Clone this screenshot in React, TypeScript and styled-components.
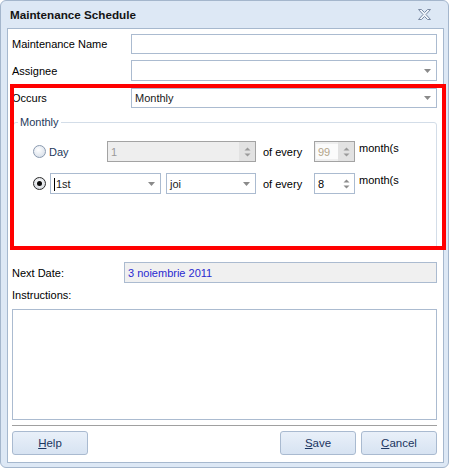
import styled, { createGlobalStyle } from "styled-components";

const GlobalStyle = createGlobalStyle`
  body {
    margin: 0;
    background: #ffffff;
    font-family: "Liberation Sans", Arial, sans-serif;
    font-size: 11px;
    color: #000;
  }
  * { box-sizing: border-box; }
`;

const FIELD_BORDER = "#abbbd0";

const Window = styled.div`
  position: relative;
  width: 449px;
  height: 468px;
  display: flex;
  flex-direction: column;
  background: #dde8f5;
  border: 1px solid #a4b6cc;
  border-radius: 6px;
`;

const TitleBar = styled.div`
  height: 27px;
  display: flex;
  align-items: center;
  justify-content: space-between;
  padding: 0 17px 0 9px;
`;

const Title = styled.div`
  font-size: 11.7px;
  font-weight: bold;
  color: #141414;
`;

const CloseButton = styled.div`
  width: 13px;
  height: 11px;
  display: flex;
`;

const Panel = styled.div`
  margin: 0 4px 4px 6px;
  flex: 1;
  display: flex;
  flex-direction: column;
  background: #ffffff;
  border: 1px solid #a6b8ce;
  padding: 0 6px 7px 4px;
`;

const FieldRow = styled.div<{ $top: number; $labelWidth?: number }>`
  margin-top: ${(p) => p.$top}px;
  display: grid;
  grid-template-columns: ${(p) => p.$labelWidth ?? 119}px 1fr;
  align-items: center;
`;

const Label = styled.div<{ $top?: number }>`
  margin-top: ${(p) => p.$top ?? 0}px;
  line-height: 14px;
  color: #000;
`;

const Box = styled.div<{ $height?: number; $readonly?: boolean }>`
  height: ${(p) => p.$height ?? 20}px;
  display: flex;
  align-items: center;
  padding-left: 3px;
  border: 1px solid ${FIELD_BORDER};
  background: ${(p) => (p.$readonly ? "#f0f0f0" : "#ffffff")};
  color: ${(p) => (p.$readonly ? "#2a2ad0" : "#000")};
`;

const ComboBox = styled(Box)<{ $width?: number }>`
  ${(p) => (p.$width ? `width: ${p.$width}px;` : "")}
  justify-content: space-between;
  padding-right: 5px;
`;

const ComboText = styled.span`
  line-height: 14px;
  color: #1a1a1a;
`;

const Caret = styled.span`
  display: inline-block;
  width: 1px;
  height: 13px;
  margin-right: 1px;
  vertical-align: -3px;
  background: #000;
`;

const GroupBox = styled.fieldset`
  margin: 7px 0 0 1px;
  padding: 0 0 54px 4px;
  border: 1px solid #d3dde8;
  border-radius: 3px;
  min-width: 0;
`;

const Legend = styled.legend`
  padding: 0 2px;
  line-height: 14px;
  color: #1e395b;
`;

const OptionRow = styled.div<{ $top: number }>`
  margin-top: ${(p) => p.$top}px;
  padding-left: 15px;
  height: 21px;
  display: flex;
  align-items: center;
`;

const Radio = styled.span<{ $checked?: boolean }>`
  width: 13px;
  height: 13px;
  flex: none;
  display: flex;
  align-items: center;
  justify-content: center;
  border-radius: 50%;
  border: 1px solid ${(p) => (p.$checked ? "#2b2b2b" : "#8a9ab0")};
  background: ${(p) =>
    p.$checked
      ? "radial-gradient(circle at 50% 40%, #ffffff, #c9ced6)"
      : "radial-gradient(circle at 40% 35%, #ffffff, #cfd8e4)"};
`;

const RadioDot = styled.span`
  width: 5px;
  height: 5px;
  border-radius: 50%;
  background: #0a0a0a;
`;

const OptionText = styled.span<{ $width: number }>`
  width: ${(p) => p.$width}px;
  margin-left: 3px;
  line-height: 14px;
  color: #1e395b;
`;

const Gap = styled.span<{ $width: number }>`
  width: ${(p) => p.$width}px;
  flex: none;
`;

const PlainText = styled.span<{ $width?: number; $raised?: boolean }>`
  ${(p) => (p.$width ? `width: ${p.$width}px;` : "")}
  line-height: 14px;
  white-space: nowrap;
  align-self: ${(p) => (p.$raised ? "flex-start" : "center")};
  color: #000;
`;

const SpinBox = styled.div<{ $width: number; $disabled?: boolean }>`
  width: ${(p) => p.$width}px;
  height: 21px;
  flex: none;
  display: flex;
  border: 1px solid ${(p) => (p.$disabled ? "#a3a3a3" : FIELD_BORDER)};
  background: ${(p) => (p.$disabled ? "#eeeeee" : "#ffffff")};
`;

const SpinText = styled.span<{ $disabled?: boolean; $boxed?: boolean }>`
  display: flex;
  align-items: center;
  padding-left: 3px;
  color: ${(p) => (p.$disabled ? "#9a9a9a" : "#000")};
  ${(p) =>
    p.$boxed
      ? `width: 22px; margin: 2px auto 2px 1px; padding-left: 2px; background: #fbfbfb; color: #b3a58a;`
      : "flex: 1;"}
`;

const SpinButtons = styled.span<{ $disabled?: boolean }>`
  width: 16px;
  flex: none;
  display: flex;
  align-items: center;
  justify-content: center;
  background: ${(p) => (p.$disabled ? "#e2e2e2" : "transparent")};
`;

const Area = styled.div`
  margin-top: 7px;
  height: 111px;
  border: 1px solid ${FIELD_BORDER};
  background: #ffffff;
`;

const Separator = styled.div`
  margin-top: 5px;
  height: 1px;
  background: #a0a0a0;
`;

const ButtonBar = styled.div`
  margin-top: 5px;
  display: flex;
  justify-content: space-between;
`;

const ButtonGroup = styled.div`
  display: flex;
  gap: 5px;
`;

const Button = styled.button`
  width: 76px;
  height: 24px;
  padding: 0;
  font: inherit;
  font-size: 11.5px;
  color: #1b3560;
  border: 1px solid #a9bad0;
  border-radius: 3px;
  background: linear-gradient(#e9f0f9, #d7e3f2);
`;

const Highlight = styled.div`
  position: absolute;
  left: 9px;
  top: 83px;
  width: 436px;
  height: 166px;
  border: 4px solid #ff0000;
  pointer-events: none;
`;

const DropArrow = () => (
  <svg width="7" height="4" viewBox="0 0 7 4">
    <path d="M0 0h7L3.5 4z" fill="#8a8a8a" />
  </svg>
);

const SpinArrows = ({ disabled }: { disabled?: boolean }) => (
  <svg width="7" height="12" viewBox="0 0 7 12">
    <path d="M0.5 4.5h6L3.5 1.5z" fill={disabled ? "#9a9a9a" : "#8c8c8c"} />
    <path d="M0.5 7.5h6L3.5 10.5z" fill={disabled ? "#9a9a9a" : "#8c8c8c"} />
  </svg>
);

const CloseIcon = () => (
  <svg width="13" height="11" viewBox="0 0 13 11">
    <path
      d="M0.5 0.5h3l3 3 3-3h3L8 5.5l4.5 5h-3l-3-3-3 3h-3L5 5.5z"
      fill="#eef2f8"
      stroke="#7a8aa3"
      strokeWidth="1"
      strokeLinejoin="round"
    />
  </svg>
);

type SpinnerProps = {
  value: string;
  width: number;
  disabled?: boolean;
  boxed?: boolean;
};

const Spinner = ({ value, width, disabled, boxed }: SpinnerProps) => (
  <SpinBox $width={width} $disabled={disabled}>
    <SpinText $disabled={disabled} $boxed={boxed}>
      {value}
    </SpinText>
    <SpinButtons $disabled={disabled}>
      <SpinArrows disabled={disabled} />
    </SpinButtons>
  </SpinBox>
);

export default function App() {
  return (
    <>
      <GlobalStyle />
      <Window>
        <TitleBar>
          <Title>Maintenance Schedule</Title>
          <CloseButton>
            <CloseIcon />
          </CloseButton>
        </TitleBar>
        <Panel>
          <FieldRow $top={5}>
            <Label>Maintenance Name</Label>
            <Box />
          </FieldRow>
          <FieldRow $top={6}>
            <Label>Assignee</Label>
            <ComboBox $height={21}>
              <ComboText />
              <DropArrow />
            </ComboBox>
          </FieldRow>
          <FieldRow $top={7}>
            <Label>Occurs</Label>
            <ComboBox>
              <ComboText>Monthly</ComboText>
              <DropArrow />
            </ComboBox>
          </FieldRow>

          <GroupBox>
            <Legend>Monthly</Legend>
            <OptionRow $top={12}>
              <Radio />
              <OptionText $width={58}>Day</OptionText>
              <Spinner value="1" width={149} disabled />
              <Gap $width={7} />
              <PlainText $width={51}>of every</PlainText>
              <Spinner value="99" width={41} disabled boxed />
              <Gap $width={4} />
              <PlainText $raised>month(s</PlainText>
            </OptionRow>
            <OptionRow $top={11}>
              <Radio $checked>
                <RadioDot />
              </Radio>
              <Gap $width={4} />
              <ComboBox $width={111} $height={21}>
                <ComboText>
                  <Caret />
                  1st
                </ComboText>
                <DropArrow />
              </ComboBox>
              <Gap $width={5} />
              <ComboBox $width={90} $height={21}>
                <ComboText>joi</ComboText>
                <DropArrow />
              </ComboBox>
              <Gap $width={7} />
              <PlainText $width={51}>of every</PlainText>
              <Spinner value="8" width={41} />
              <Gap $width={4} />
              <PlainText $raised>month(s</PlainText>
            </OptionRow>
          </GroupBox>

          <FieldRow $top={13} $labelWidth={112}>
            <Label>Next Date:</Label>
            <Box $height={21} $readonly>
              3 noiembrie 2011
            </Box>
          </FieldRow>
          <Label $top={5}>Instructions:</Label>
          <Area />
          <Separator />
          <ButtonBar>
            <Button>
              <u>H</u>elp
            </Button>
            <ButtonGroup>
              <Button>
                <u>S</u>ave
              </Button>
              <Button>
                <u>C</u>ancel
              </Button>
            </ButtonGroup>
          </ButtonBar>
        </Panel>
        <Highlight />
      </Window>
    </>
  );
}
